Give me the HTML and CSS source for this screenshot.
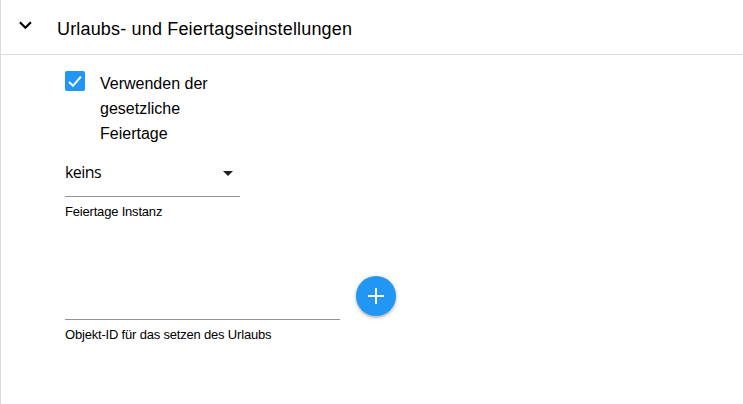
FILE: index.html
```html
<!DOCTYPE html>
<html lang="de">
<head>
<meta charset="utf-8">
<title>Urlaubs- und Feiertagseinstellungen</title>
<link rel="stylesheet" href="styles.css">
</head>
<body>
<section class="panel">
  <header class="header">
    <svg class="chevron" viewBox="0 0 24 24"><path d="M6.9 9.2 12.4 14.7 17.9 9.2"/></svg>
    <h1 class="title">Urlaubs- und Feiertagseinstellungen</h1>
  </header>
  <div class="content">
    <label class="check">
      <span class="box"><svg viewBox="0 0 20 20"><path d="M3.9 10.9 8 14.8 15.9 5.6"/></svg></span>
      <span class="check-text">Verwenden der gesetzliche Feiertage</span>
    </label>
    <div class="select">
      <span>keins</span>
      <svg class="arrow" viewBox="0 0 10 5"><path d="M0 0h10L5 5z"/></svg>
    </div>
    <div class="caption">Feiertage Instanz</div>
    <div class="object-row">
      <div class="input"></div>
      <button class="add" aria-label="+"><svg viewBox="0 0 24 24"><path d="M12 4v16M4 12h16"/></svg></button>
    </div>
    <div class="caption">Objekt-ID für das setzen des Urlaubs</div>
  </div>
</section>
</body>
</html>
```
FILE: styles.css
```css
* { box-sizing: border-box; }
body { margin: 0; background: #fff; color: #000; font-family: "Liberation Sans", Arial, sans-serif; }
.panel { height: 404px; border-left: 1px solid #dcdcdc; overflow: hidden; }
.header { display: flex; height: 55px; padding-left: 12px; border-bottom: 1px solid #dcdcdc; }
.chevron { width: 24px; height: 24px; margin-top: 13px; fill: none; stroke: #000; stroke-width: 2.2; }
.title { margin: 17px 0 0 20px; font-size: 18px; line-height: 24px; font-weight: 400; letter-spacing: 0.17px; white-space: nowrap; }
.content { padding: 16px 0 0 64px; }
.check { display: flex; gap: 15px; height: 82px; }
.box { width: 20px; height: 20px; background: #2196f3; border-radius: 2px; }
.box svg { display: block; fill: none; stroke: #fff; stroke-width: 2; }
.check-text { width: 120px; font-size: 16px; line-height: 25px; }
.select { display: flex; justify-content: space-between; width: 175px; height: 44px; padding: 7px 7px 0 0; border-bottom: 1px solid #949494; font: 16px/24px "Open Sans", "Noto Sans", sans-serif; letter-spacing: -0.55px; }
.arrow { width: 10px; height: 5px; margin-top: 11px; fill: #212121; }
.caption { margin-top: 7px; font-size: 13px; line-height: 16px; letter-spacing: -0.19px; white-space: nowrap; }
.object-row { display: flex; gap: 16px; height: 44px; margin-top: 56px; }
.input { width: 275px; border-bottom: 1px solid #949494; }
.add { width: 40px; height: 40px; padding: 8px; border: 0; border-radius: 50%; background: #2196f3; box-shadow: 0 1px 5px rgba(0,0,0,.2), 0 2px 2px rgba(0,0,0,.14); }
.add svg { display: block; width: 24px; height: 24px; fill: none; stroke: #fff; stroke-width: 2; }
```
